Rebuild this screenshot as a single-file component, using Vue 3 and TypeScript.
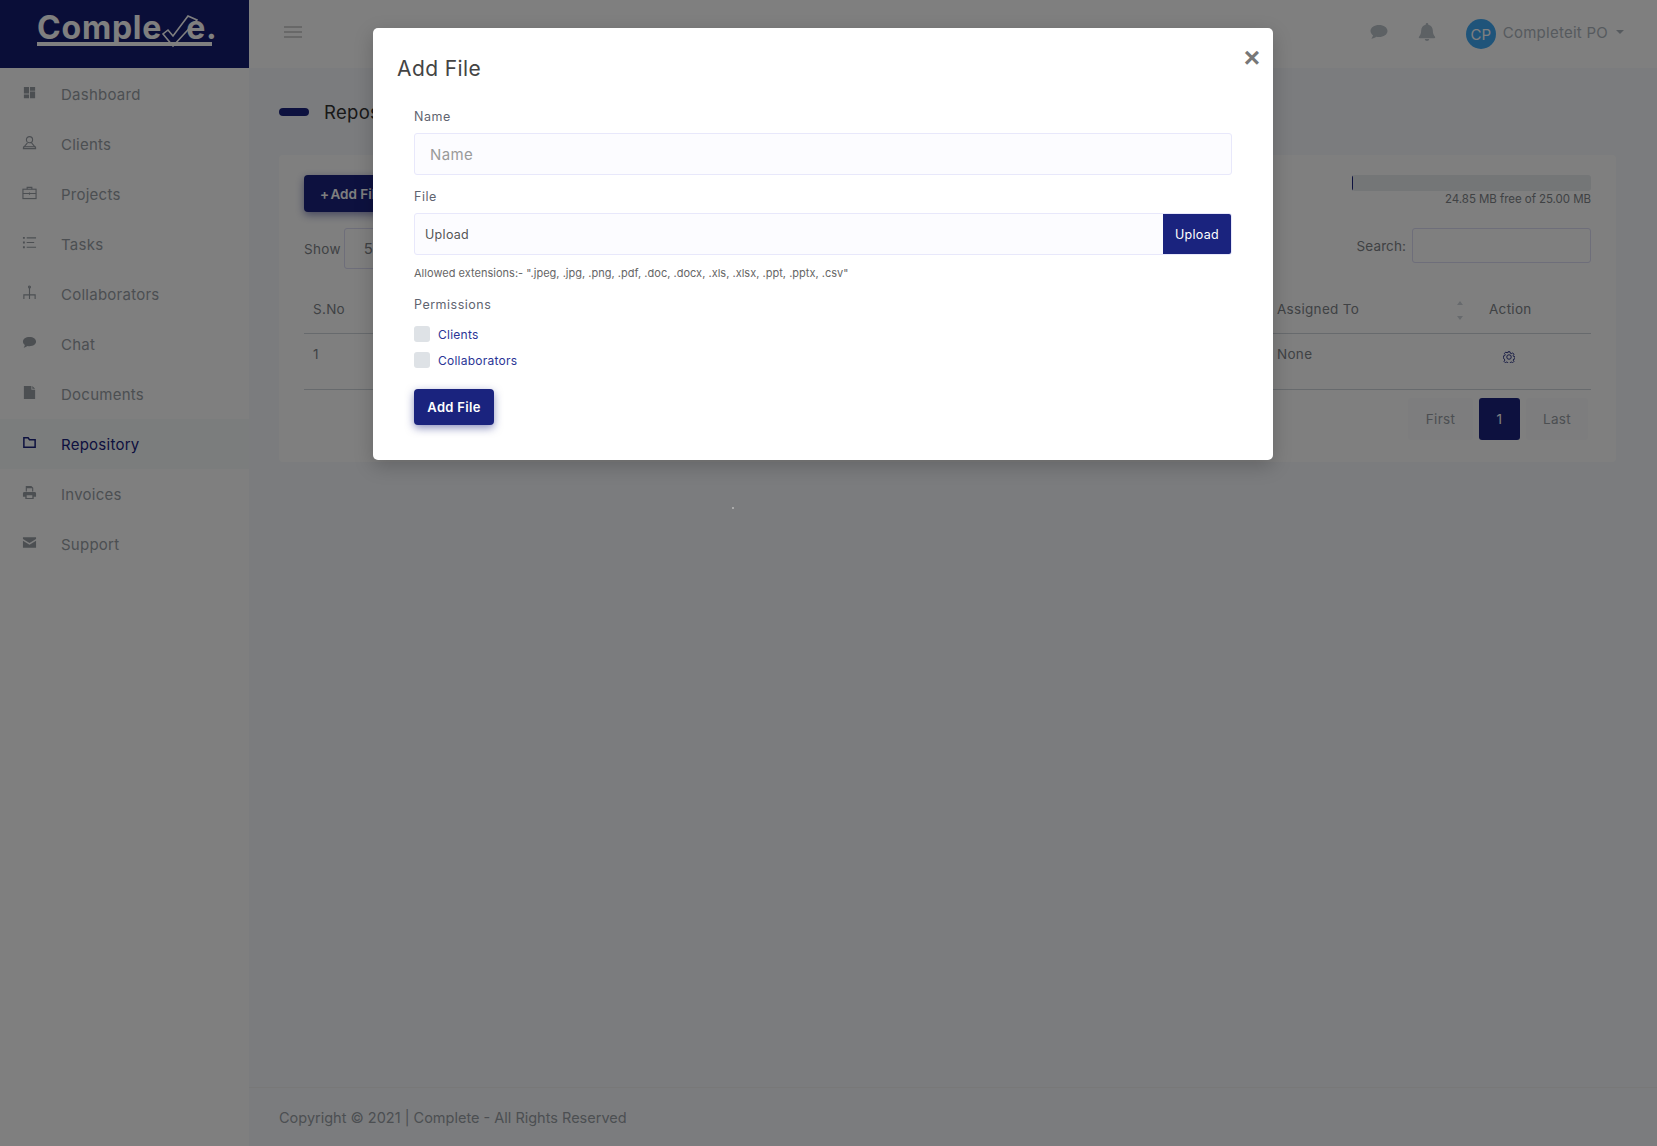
<template>
  <div class="layout">
    <aside class="sidebar">
      <div class="brand">
        <div class="logo">
          <span>Comple</span>
          <span class="logo-end">e.</span>
          <svg class="logo-check" viewBox="0 0 36 33" fill="none" stroke="#fff" stroke-width="1.600">
            <path d="M1 19 L11 31 L35 5 L26 1 L11 21 L6 15 Z" />
          </svg>
        </div>
      </div>
      <nav class="nav">
        <a v-for="item in navItems" :key="item.label" class="nav-item" :class="{ active: item.label === 'Repository' }">
          <svg class="nav-icon" viewBox="0 0 16 16" v-html="item.icon"></svg>
          <span>{{ item.label }}</span>
        </a>
      </nav>
    </aside>

    <div class="main">
      <header class="topbar">
        <button class="burger"><i></i><i></i><i></i></button>
        <div class="top-right">
          <svg class="top-icon chat" viewBox="0 0 18 16" fill="#bac2c9">
            <path d="M9 1C4.3 1 .5 3.6.5 7c0 1.700 1 3.200 2.500 4.300-.2 1.300-1 2.500-1.700 3.400 1.800-.1 3.700-.9 5-2 .9.200 1.800.3 2.700.3 4.700 0 8.500-2.600 8.500-6S13.700 1 9 1z" />
          </svg>
          <svg class="top-icon bell" viewBox="0 0 18 18" fill="#bac2c9">
            <path d="M9 0c-.8 0-1.300.6-1.300 1.300v.5C4.900 2.400 3.200 4.700 3.200 7.300c0 3.700-1 5-2.200 6.400-.5.600-.1 1.500.7 1.500h14.600c.8 0 1.200-.9.700-1.500-1.200-1.400-2.200-2.700-2.200-6.400 0-2.600-1.700-4.900-4.500-5.500v-.5C10.300.6 9.800 0 9 0zM6.800 16c0 1.200 1 2 2.200 2s2.200-.8 2.200-2z" />
          </svg>
          <div class="avatar">CP</div>
          <span class="user-name">Completeit PO</span>
          <i class="caret"></i>
        </div>
      </header>

      <main class="content">
        <div class="page-title">
          <i class="title-bar"></i>
          <h1>Repository</h1>
        </div>

        <section class="card">
          <div class="card-head">
            <button class="add-btn"><span class="plus">+</span> Add File</button>
            <div class="storage">
              <div class="progress"><div class="progress-fill" :style="{ width: usedPercent + '%' }"></div></div>
              <p class="storage-text">24.85 MB free of 25.00 MB</p>
            </div>
          </div>

          <div class="table-tools">
            <div class="show">
              <span>Show</span>
              <div class="show-select">50</div>
            </div>
            <div class="search">
              <span>Search:</span>
              <div class="search-box"></div>
            </div>
          </div>

          <div class="table">
            <div class="row row-head">
              <div class="col-no">S.No</div>
              <div class="col-fill"></div>
              <div class="col-assigned">
                <span>Assigned To</span>
                <span class="sort"><i class="up"></i><i class="down"></i></span>
              </div>
              <div class="col-action">Action</div>
            </div>
            <div class="row row-body">
              <div class="col-no">1</div>
              <div class="col-fill"></div>
              <div class="col-assigned">None</div>
              <div class="col-action">
                <svg class="gear" viewBox="0 0 16 16" fill="none" stroke="#1a237e" stroke-width="1.200">
                  <path d="M6.700 1h2.600l.4 1.900 1.400.6 1.700-1 1.800 1.800-1 1.700.6 1.400 1.900.4v2.600l-1.900.4-.6 1.400 1 1.700-1.800 1.800-1.700-1-1.400.6-.4 1.900H6.700l-.4-1.900-1.400-.6-1.700 1-1.800-1.800 1-1.700-.6-1.400L.4 9.300V6.700l1.900-.4.6-1.400-1-1.700 1.800-1.800 1.700 1 1.400-.6z" />
                  <circle cx="8" cy="8" r="3" />
                </svg>
              </div>
            </div>
          </div>

          <div class="pager">
            <span class="page-btn first">First</span>
            <span class="page-btn current">1</span>
            <span class="page-btn last">Last</span>
          </div>
        </section>
      </main>

      <footer class="footer">Copyright © 2021 | Complete - All Rights Reserved</footer>
    </div>

    <div class="backdrop">
      <i class="speck"></i>
      <div class="modal">
        <div class="modal-head">
          <h2>Add File</h2>
          <button class="close">×</button>
        </div>
        <form class="modal-body" @submit.prevent>
          <label class="field-label">Name</label>
          <input class="text-input" type="text" placeholder="Name" />
          <label class="field-label file-label">File</label>
          <div class="file-input">
            <span class="file-name">Upload</span>
            <span class="file-btn">Upload</span>
          </div>
          <p class="hint">Allowed extensions:- ".jpeg, .jpg, .png, .pdf, .doc, .docx, .xls, .xlsx, .ppt, .pptx, .csv"</p>
          <div class="field-label perm-label">Permissions</div>
          <label v-for="perm in permissions" :key="perm" class="check">
            <i class="check-box"></i>
            <span>{{ perm }}</span>
          </label>
          <button class="submit" type="submit">Add File</button>
        </form>
      </div>
    </div>
  </div>
</template>

<script setup lang="ts">
interface NavItem {
  label: string
  icon: string
}

const usedPercent = 0.6

const permissions: string[] = ['Clients', 'Collaborators']

const stroke = 'fill="none" stroke="currentColor" stroke-width="1.200"'

const navItems: NavItem[] = [
  {
    label: 'Dashboard',
    icon: '<path fill="currentColor" d="M2 2h5.500v7H2zM8.500 2H14v4H8.500zM2 10h5.500v4H2zM8.500 7H14v7H8.500z"/>',
  },
  {
    label: 'Clients',
    icon: `<g ${stroke}><circle cx="8" cy="5" r="3.300"/><path d="M5.800 8.500 1.500 13.500v1h13v-1L10.200 8.500"/><path d="M1.500 12.500h13"/></g>`,
  },
  {
    label: 'Projects',
    icon: `<g ${stroke}><rect x="1" y="4.500" width="14" height="10"/><path d="M5.500 4.500V2.500h5v2M1 9h14M8 8v2.500"/></g>`,
  },
  {
    label: 'Tasks',
    icon: `<g ${stroke}><path d="M5 3h10M5 8h8M5 13h10"/></g><path fill="currentColor" d="M1 2h2v2H1zM1 7h2v2H1zM1 12h2v2H1z"/>`,
  },
  {
    label: 'Collaborators',
    icon: `<g ${stroke}><path d="M8 3v10M2 15v-4.500h12V15M8 10.500V15"/><circle cx="8" cy="2" r="1"/></g>`,
  },
  {
    label: 'Chat',
    icon: '<path fill="currentColor" d="M8 2C3.900 2 1 4.200 1 7c0 1.500.8 2.700 2 3.600-.1 1-.8 2.200-1.300 2.900 1.600-.1 3-.8 4.200-1.700.7.100 1.400.2 2.100.2 4.100 0 7-2.200 7-5S12.100 2 8 2z"/>',
  },
  {
    label: 'Documents',
    icon: '<path fill="currentColor" d="M2 1h8v4h4v10H2zM11 1l3 3h-3z"/>',
  },
  {
    label: 'Repository',
    icon: '<path fill="none" stroke="currentColor" stroke-width="1.600" d="M2 3h4.500l1.500 2h6v8H2z"/>',
  },
  {
    label: 'Invoices',
    icon: '<path fill="currentColor" d="M4 1h6l2 2v4H10.800V3.500H5.200V7H4zM2.500 7.500h11c.8 0 1.500.7 1.500 1.500v3.500h-2.500V15h-9v-2.500H1V9c0-.8.7-1.500 1.500-1.500zM5 11v2.800h6V11z"/>',
  },
  {
    label: 'Support',
    icon: '<path fill="currentColor" d="M1 2.500h14v1.800L8 8.600 1 4.300zM1 6l7 4.300L15 6v7.500H1z"/>',
  },
]
</script>

<style>
html,
body {
  margin: 0;
  background: #fff;
}
</style>

<style scoped>
.layout {
  position: relative;
  display: flex;
  width: 1657px;
  height: 1146px;
  overflow: hidden;
  font-family: Inter, "Open Sans", sans-serif;
  color: #989ea5;
  letter-spacing: 0.3px;
}

.sidebar {
  width: 249px;
  flex-shrink: 0;
  background: #fff;
}

.brand {
  height: 68px;
  background: #141c70;
  display: flex;
  padding-left: 37px;
  box-sizing: border-box;
}

.logo {
  position: relative;
  display: flex;
  align-self: flex-start;
  width: 175px;
  height: 38px;
  margin-top: 4px;
  border-bottom: 4px solid #fff;
  color: #fff;
  font-size: 32px;
  font-weight: 700;
  line-height: 48px;
  letter-spacing: 0.8px;
}

.logo-end {
  margin-left: 24px;
}

.logo-check {
  position: absolute;
  left: 125px;
  top: 11px;
  width: 36px;
  height: 33px;
}

.nav {
  display: flex;
  flex-direction: column;
  padding-top: 1px;
}

.nav-item {
  height: 50px;
  display: flex;
  align-items: center;
  gap: 24px;
  padding-left: 22px;
  font-size: 15px;
  color: #989ea5;
  letter-spacing: 0.25px;
}

.nav-item.active {
  background: #f6fafa;
  color: #1a237e;
}

.nav-icon {
  width: 15px;
  height: 15px;
  margin-top: -4px;
  flex-shrink: 0;
}

.main {
  flex: 1;
  display: flex;
  flex-direction: column;
  min-width: 0;
}

.topbar {
  height: 68px;
  flex-shrink: 0;
  background: #fff;
  display: flex;
  align-items: center;
  justify-content: space-between;
  padding: 0 33px 4px 35px;
  box-sizing: border-box;
}

.burger {
  width: 18px;
  padding: 0;
  border: 0;
  background: none;
  display: flex;
  flex-direction: column;
  gap: 3px;
}

.burger i {
  display: block;
  height: 2px;
  background: #d0d0d0;
}

.top-right {
  display: flex;
  align-items: center;
}

.top-icon {
  flex-shrink: 0;
}

.chat {
  width: 18px;
  height: 16px;
  margin-right: 30px;
}

.bell {
  width: 18px;
  height: 18px;
  margin-right: 30px;
}

.avatar {
  width: 30px;
  height: 30px;
  border-radius: 50%;
  background: #3fa9f5;
  color: #fff;
  font-size: 15px;
  display: flex;
  align-items: center;
  justify-content: center;
  letter-spacing: 0;
  margin-top: 4px;
}

.user-name {
  margin-left: 7px;
  font-size: 15px;
  color: #adb5bd;
  letter-spacing: 0.25px;
}

.caret {
  margin-left: 8px;
  border-top: 4px solid #adb5bd;
  border-left: 4px solid transparent;
  border-right: 4px solid transparent;
}

.content {
  flex: 1;
  padding: 0 41px 0 30px;
  background: #f7f9fc;
}

.page-title {
  display: flex;
  align-items: center;
  gap: 15px;
  height: 87px;
}

.title-bar {
  width: 30px;
  height: 8px;
  border-radius: 4px;
  background: #1a237e;
}

h1 {
  margin: 0;
  font-size: 18.500px;
  font-weight: 400;
  color: #333;
}

.card {
  background: #fff;
  border-radius: 4px;
  height: 307px;
  padding: 20px 25px 0;
  box-sizing: border-box;
}

.card-head {
  display: flex;
  justify-content: space-between;
  align-items: flex-start;
}

.add-btn {
  height: 37px;
  padding: 0 16px;
  border: 0;
  border-radius: 4px;
  background: #1a237e;
  color: #fff;
  font: 600 13.500px Inter, sans-serif;
  box-shadow: 0 3px 8px rgba(26, 35, 126, 0.5);
}

.plus {
  margin-right: -2px;
}

.storage {
  width: 239px;
}

.progress {
  height: 16px;
  border-radius: 3px;
  background: #e9ecef;
  overflow: hidden;
}

.progress-fill {
  height: 100%;
  background: #1a237e;
}

.storage-text {
  margin: 0;
  text-align: right;
  font-size: 11.500px;
  line-height: 17px;
  color: #808489;
  letter-spacing: -0.05px;
}

.table-tools {
  display: flex;
  justify-content: space-between;
  align-items: flex-start;
  margin-top: 16px;
  font-size: 13.500px;
  color: #808489;
}

.show {
  display: flex;
  align-items: center;
  gap: 3px;
}

.show-select {
  width: 90px;
  height: 41px;
  border: 1px solid #dcdcf5;
  border-radius: 3px;
  box-sizing: border-box;
  display: flex;
  align-items: center;
  padding-left: 19px;
  font-size: 15px;
}

.search {
  display: flex;
  align-items: center;
  gap: 6px;
  letter-spacing: 0.1px;
}

.search-box {
  width: 179px;
  height: 35px;
  border: 1px solid #dcdcf5;
  border-radius: 3px;
  box-sizing: border-box;
}

.table {
  margin-top: 16px;
  font-size: 13.500px;
  color: #808489;
}

.row {
  display: flex;
  border-bottom: 1px solid #ced4da;
  box-sizing: border-box;
}

.row-head {
  height: 49px;
  align-items: center;
}

.row-body {
  height: 56px;
  padding-top: 12px;
}

.col-no {
  width: 60px;
  padding-left: 9px;
  box-sizing: border-box;
}

.col-fill {
  flex: 1;
}

.col-assigned {
  width: 212px;
  padding-right: 26px;
  box-sizing: border-box;
  display: flex;
  justify-content: space-between;
}

.col-action {
  width: 102px;
}

.row-body .col-action {
  padding: 5px 0 0 14px;
  box-sizing: border-box;
}

.sort {
  display: flex;
  flex-direction: column;
  gap: 11px;
  align-items: center;
  margin-bottom: -4px;
}

.sort i {
  border-left: 3.500px solid transparent;
  border-right: 3.500px solid transparent;
}

.sort .up {
  border-bottom: 4px solid #ced4da;
}

.sort .down {
  border-top: 4px solid #ced4da;
}

.gear {
  width: 12px;
  height: 12px;
  display: block;
}

.pager {
  display: flex;
  justify-content: flex-end;
  gap: 6px;
  margin: 8px 3px 0 0;
  font-size: 13.500px;
}

.page-btn {
  height: 42px;
  border-radius: 3px;
  background: #fbfbfc;
  display: flex;
  align-items: center;
  justify-content: center;
  color: #989ea5;
}

.first {
  width: 65px;
}

.last {
  width: 62px;
}

.current {
  width: 41px;
  background: #1a237e;
  color: #fff;
}

.footer {
  height: 59px;
  flex-shrink: 0;
  border-top: 1px solid #f0f0f0;
  background: #f7f9fc;
  padding: 20px 0 0 30px;
  box-sizing: border-box;
  font-size: 14.500px;
  line-height: 20px;
  color: #989ea5;
  letter-spacing: 0;
}

.backdrop {
  position: absolute;
  inset: 0;
  background: rgba(0, 0, 0, 0.5);
  padding: 28px 0 0 373px;
  box-sizing: border-box;
}

.speck {
  position: absolute;
  left: 732px;
  top: 507px;
  width: 2px;
  height: 2px;
  background: #aaa;
}

.modal {
  width: 900px;
  height: 432px;
  background: #fff;
  border-radius: 5px;
  box-shadow: 0 6px 20px rgba(0, 0, 0, 0.2);
  box-sizing: border-box;
  padding: 0 41px 0 24px;
}

.modal-head {
  position: relative;
  height: 70px;
  display: flex;
  align-items: center;
}

h2 {
  margin: 10px 0 0;
  font-size: 21px;
  font-weight: 400;
  color: #444;
  letter-spacing: 0.4px;
}

.close {
  position: absolute;
  right: -32px;
  top: 14px;
  width: 24px;
  height: 32px;
  padding: 0;
  border: 0;
  background: none;
  color: #777;
  font: 700 28px/32px "Liberation Sans", sans-serif;
}

.modal-body {
  display: flex;
  flex-direction: column;
  align-items: flex-start;
  padding-left: 17px;
  margin-top: 10px;
}

.field-label {
  height: 18px;
  font-size: 12.500px;
  line-height: 18px;
  font-weight: 400;
  color: #5f6470;
  letter-spacing: 0.5px;
}

.text-input {
  width: 818px;
  height: 42px;
  margin-top: 7px;
  padding: 0 15px;
  box-sizing: border-box;
  border: 1px solid #e8e8fb;
  border-radius: 3px;
  background: #fcfcff;
  font: 400 15px Inter, sans-serif;
  letter-spacing: 0.35px;
  outline: none;
}

.text-input::placeholder {
  color: #9a9a9a;
  opacity: 1;
}

.file-label {
  margin-top: 13px;
}

.file-input {
  width: 818px;
  height: 42px;
  margin-top: 7px;
  border: 1px solid #e8e8fb;
  border-radius: 3px;
  background: #fcfcff;
  box-sizing: border-box;
  display: flex;
  align-items: center;
  justify-content: space-between;
  overflow: hidden;
}

.file-name {
  padding-left: 10px;
  font-size: 12.500px;
  color: #555;
}

.file-btn {
  width: 68px;
  height: 100%;
  background: #1a237e;
  color: #fff;
  font-size: 12.500px;
  display: flex;
  align-items: center;
  justify-content: center;
}

.hint {
  margin: 10px 0 0;
  font-size: 11px;
  line-height: 16px;
  color: #666;
  letter-spacing: 0.02px;
}

.perm-label {
  margin-top: 15px;
}

.check {
  display: flex;
  align-items: center;
  gap: 8px;
  height: 16px;
  margin-top: 10px;
  font-size: 12px;
  letter-spacing: 0.25px;
  color: #2b3596;
}

.perm-label + .check {
  margin-top: 12px;
}

.check-box {
  width: 16px;
  height: 16px;
  border-radius: 3px;
  background: #dee2e6;
}

.submit {
  width: 80px;
  height: 36px;
  margin-top: 21px;
  padding: 0;
  border: 0;
  border-radius: 4px;
  background: #1a237e;
  color: #fff;
  font: 600 13px Inter, sans-serif;
  letter-spacing: 0.3px;
  box-shadow: 0 3px 8px rgba(26, 35, 126, 0.5);
}
</style>
